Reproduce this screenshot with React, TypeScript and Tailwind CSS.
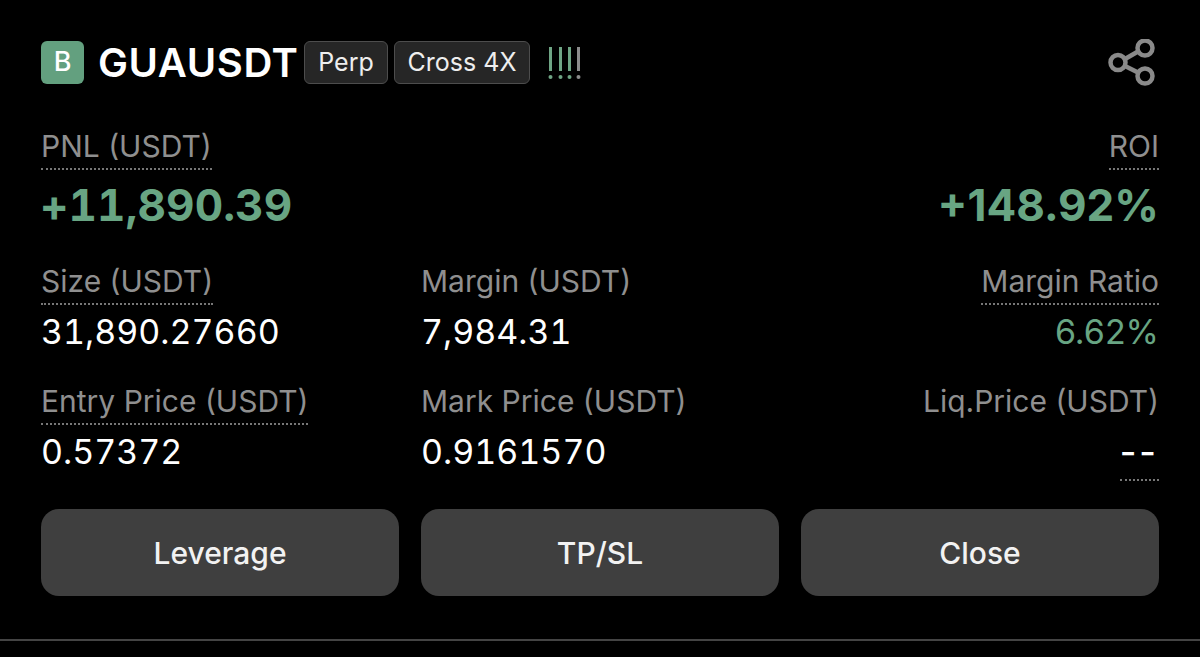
import React from "react";

const Label = ({ text, dotted = true }: { text: string; dotted?: boolean }) => (
  <span
    className={`inline-block h-[45px] whitespace-nowrap pt-[3px] text-[30px] leading-[36px] text-[#8f8f8f] ${
      dotted ? "border-b-2 border-dotted border-[#777777]" : ""
    }`}
  >
    {text}
  </span>
);

const Cell = ({
  label,
  value,
  right = false,
  dotted = true,
  valueClass = "text-white tabular-nums",
}: {
  label: string;
  value: string;
  right?: boolean;
  dotted?: boolean;
  valueClass?: string;
}) => (
  <div className={`flex flex-col ${right ? "items-end" : "items-start"}`}>
    <Label text={label} dotted={dotted} />
    <span className={`mt-[6px] text-[34px] leading-[42px] ${valueClass}`}>{value}</span>
  </div>
);

const Button = ({ text }: { text: string }) => (
  <button className="flex h-[87px] items-center justify-center rounded-[18px] bg-[#3f3f3f] pt-[1px] text-[30px] font-medium text-[#f2f2f2]">
    {text}
  </button>
);

const Tag = ({ text, w }: { text: string; w: string }) => (
  <span
    className={`flex h-[43px] items-center justify-center rounded-[6px] border border-[#4d4d4d] bg-[#262626] text-[25px] text-[#eeeeee] ${w}`}
  >
    {text}
  </span>
);

export default function App() {
  return (
    <div className="flex h-[657px] w-[1200px] flex-col overflow-hidden bg-black px-[41px] pt-[41px] font-['Inter',sans-serif]">
      <header className="flex h-[43px] items-center">
        <span className="flex h-[43px] w-[43px] items-center justify-center rounded-[6px] bg-[#63a07f] text-[27px] font-medium text-white">
          B
        </span>
        <span className="ml-[14px] w-[200px] whitespace-nowrap text-[40px] font-semibold leading-none tracking-[0.6px] text-white">GUAUSDT</span>
        <div className="ml-[6px] flex gap-[6px]">
          <Tag text="Perp" w="w-[84px]" />
          <Tag text="Cross 4X" w="w-[136px]" />
        </div>
        <svg className="ml-[18px]" width="33" height="36" viewBox="0 0 33 36" aria-hidden="true">
          <g strokeWidth="3" strokeLinecap="butt">
            <path d="M2.5 2v24" stroke="#6fa585" />
            <path d="M12.5 2v24" stroke="#6fa585" />
            <path d="M21.5 2v24" stroke="#6fa585" />
            <path d="M30.5 2v24" stroke="#8c8c8c" />
          </g>
          <circle cx="2.5" cy="32" r="2" fill="#6fa585" />
          <circle cx="12.5" cy="32" r="2" fill="#6fa585" />
          <circle cx="21.5" cy="32" r="2" fill="#6fa585" />
          <circle cx="30.5" cy="32" r="2" fill="#8c8c8c" />
        </svg>
        <svg className="ml-auto mr-[4px]" width="48" height="48" viewBox="0 0 48 48" fill="none" stroke="#8a8a8a" strokeWidth="4.5" aria-hidden="true">
          <circle cx="38" cy="9" r="7.5" />
          <circle cx="38" cy="37" r="7.5" />
          <circle cx="11" cy="23.5" r="7.5" />
          <path d="M18 20 31 12.5M18 27l13 6.5" />
        </svg>
      </header>

      <section className="mt-[41px] flex items-start justify-between">
        <div className="flex flex-col items-start">
          <Label text="PNL (USDT)" />
          <span className="mt-[9px] -ml-[1px] text-[44px] font-bold leading-[52px] tracking-[0.1px] tabular-nums text-[#68a583]">+11,890.39</span>
        </div>
        <div className="flex flex-col items-end">
          <Label text="ROI" />
          <span className="mt-[9px] text-[44px] font-bold leading-[52px] text-[#68a583]">+148.92%</span>
        </div>
      </section>

      <section className="mt-[29px] grid grid-cols-3 gap-x-[22px] gap-y-[27px]">
        <Cell label="Size (USDT)" value="31,890.27660" />
        <Cell label="Margin (USDT)" value="7,984.31" dotted={false} />
        <Cell label="Margin Ratio" value="6.62%" right valueClass="text-[#68a583]" />
        <Cell label="Entry Price (USDT)" value="0.57372" />
        <Cell label="Mark Price (USDT)" value="0.9161570" dotted={false} />
        <div className="flex flex-col items-end">
          <Label text="Liq.Price (USDT)" dotted={false} />
          <span className="mt-[6px] h-[50px] border-b-2 border-dotted border-[#777777] text-[36px] font-medium leading-[42px] tracking-[3px] text-white">
            --
          </span>
        </div>
      </section>

      <section className="mt-[28px] grid grid-cols-3 gap-x-[22px]">
        <Button text="Leverage" />
        <Button text="TP/SL" />
        <Button text="Close" />
      </section>

      <div className="-mx-[41px] mt-[43px] h-[2px] bg-[#444444]" />
    </div>
  );
}
